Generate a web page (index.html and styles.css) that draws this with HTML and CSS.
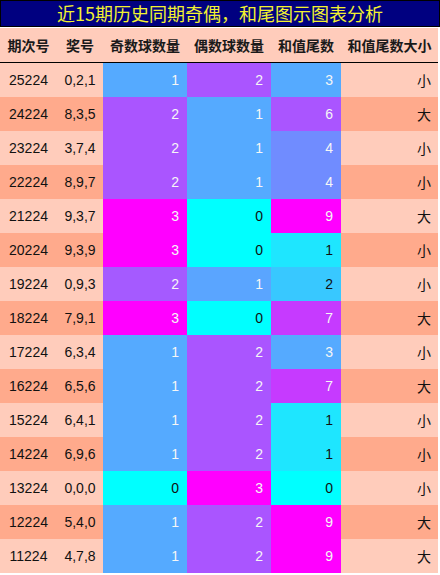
FILE: index.html
```html
<!DOCTYPE html>
<html lang="zh">
<head>
<meta charset="utf-8">
<title>近15期历史同期奇偶，和尾图示图表分析</title>
<link rel="stylesheet" href="styles.css">
</head>
<body>
<div class="title">近15期历史同期奇偶，和尾图示图表分析</div>
<table class="grid">
  <colgroup>
    <col class="c1"><col class="c2"><col class="c3"><col class="c4"><col class="c5"><col class="c6">
  </colgroup>
  <thead>
    <tr><th>期次号</th><th>奖号</th><th>奇数球数量</th><th>偶数球数量</th><th>和值尾数</th><th>和值尾数大小</th></tr>
  </thead>
  <tbody>
    <tr class="lt"><td>25224</td><td>0,2,1</td><td class="n v1">1</td><td class="n v2">2</td><td class="n s3">3</td><td class="sz">小</td></tr>
    <tr class="dk"><td>24224</td><td>8,3,5</td><td class="n v2">2</td><td class="n v1">1</td><td class="n s6">6</td><td class="sz">大</td></tr>
    <tr class="lt"><td>23224</td><td>3,7,4</td><td class="n v2">2</td><td class="n v1">1</td><td class="n s4">4</td><td class="sz">小</td></tr>
    <tr class="dk"><td>22224</td><td>8,9,7</td><td class="n v2">2</td><td class="n v1">1</td><td class="n s4">4</td><td class="sz">小</td></tr>
    <tr class="lt"><td>21224</td><td>9,3,7</td><td class="n v3">3</td><td class="n v0">0</td><td class="n s9">9</td><td class="sz">大</td></tr>
    <tr class="dk"><td>20224</td><td>9,3,9</td><td class="n v3">3</td><td class="n v0">0</td><td class="n s1">1</td><td class="sz">小</td></tr>
    <tr class="lt"><td>19224</td><td>0,9,3</td><td class="n v2b">2</td><td class="n v1b">1</td><td class="n s2">2</td><td class="sz">小</td></tr>
    <tr class="dk"><td>18224</td><td>7,9,1</td><td class="n v3">3</td><td class="n v0">0</td><td class="n s7">7</td><td class="sz">大</td></tr>
    <tr class="lt"><td>17224</td><td>6,3,4</td><td class="n v1">1</td><td class="n v2">2</td><td class="n s3">3</td><td class="sz">小</td></tr>
    <tr class="dk"><td>16224</td><td>6,5,6</td><td class="n v1">1</td><td class="n v2">2</td><td class="n s7">7</td><td class="sz">大</td></tr>
    <tr class="lt"><td>15224</td><td>6,4,1</td><td class="n v1">1</td><td class="n v2">2</td><td class="n s1">1</td><td class="sz">小</td></tr>
    <tr class="dk"><td>14224</td><td>6,9,6</td><td class="n v1">1</td><td class="n v2">2</td><td class="n s1">1</td><td class="sz">小</td></tr>
    <tr class="lt"><td>13224</td><td>0,0,0</td><td class="n v0">0</td><td class="n v3">3</td><td class="n s0">0</td><td class="sz">小</td></tr>
    <tr class="dk"><td>12224</td><td>5,4,0</td><td class="n v1">1</td><td class="n v2">2</td><td class="n s9">9</td><td class="sz">大</td></tr>
    <tr class="lt"><td>11224</td><td>4,7,8</td><td class="n v1">1</td><td class="n v2">2</td><td class="n s9">9</td><td class="sz">大</td></tr>
  </tbody>
</table>
</body>
</html>
```
FILE: styles.css
```css
html, body {
  margin: 0;
  padding: 0;
  background: #ffffff;
}
body {
  width: 440px;
  font-family: "Liberation Sans", "Noto Sans CJK SC", sans-serif;
}
.title {
  box-sizing: border-box;
  width: 440px;
  height: 27px;
  margin-bottom: 1px;
  border: 1px solid #000000;
  background: #000080;
  color: #f2f230;
  font-family: "Noto Sans CJK SC", sans-serif;
  font-size: 18px;
  line-height: 24px;
  text-align: center;
}
.grid {
  width: 438px;
  border-collapse: collapse;
  table-layout: fixed;
  font-size: 14px;
  color: #111111;
}
.c1 { width: 57px; }
.c2 { width: 46px; }
.c3 { width: 84px; }
.c4 { width: 84px; }
.c5 { width: 70px; }
.c6 { width: 97px; }
.grid th {
  height: 34px;
  padding: 0;
  background: #ffccbb;
  border-bottom: 1px solid #000000;
  font-family: "Noto Sans CJK SC", sans-serif;
  font-weight: bold;
  font-size: 14px;
  color: #1a1a1a;
  text-align: center;
  white-space: nowrap;
}
.grid td {
  height: 34px;
  padding: 0;
  text-align: center;
}
.lt td { background: #ffccbb; }
.dk td { background: #ffaa8c; }
.grid td.n {
  text-align: right;
  padding-right: 8px;
  color: #f6f6f6;
}
.grid td.sz {
  text-align: right;
  padding-right: 7px;
  font-family: "Noto Sans CJK SC", sans-serif;
  font-size: 14px;
}
.grid td.v0 { background: #00ffff; color: #111111; }
.grid td.v1 { background: #55aaff; }
.grid td.v1b { background: #5aa5ff; }
.grid td.v2 { background: #aa55ff; }
.grid td.v2b { background: #a55aff; }
.grid td.v3 { background: #ff00ff; }
.grid td.s0 { background: #00ffff; color: #111111; }
.grid td.s1 { background: #1ee6ff; color: #111111; }
.grid td.s2 { background: #38c8ff; color: #111111; }
.grid td.s3 { background: #55aaff; }
.grid td.s4 { background: #708cff; }
.grid td.s6 { background: #aa55ff; }
.grid td.s7 { background: #c63aff; }
.grid td.s9 { background: #ff00ff; }
```
